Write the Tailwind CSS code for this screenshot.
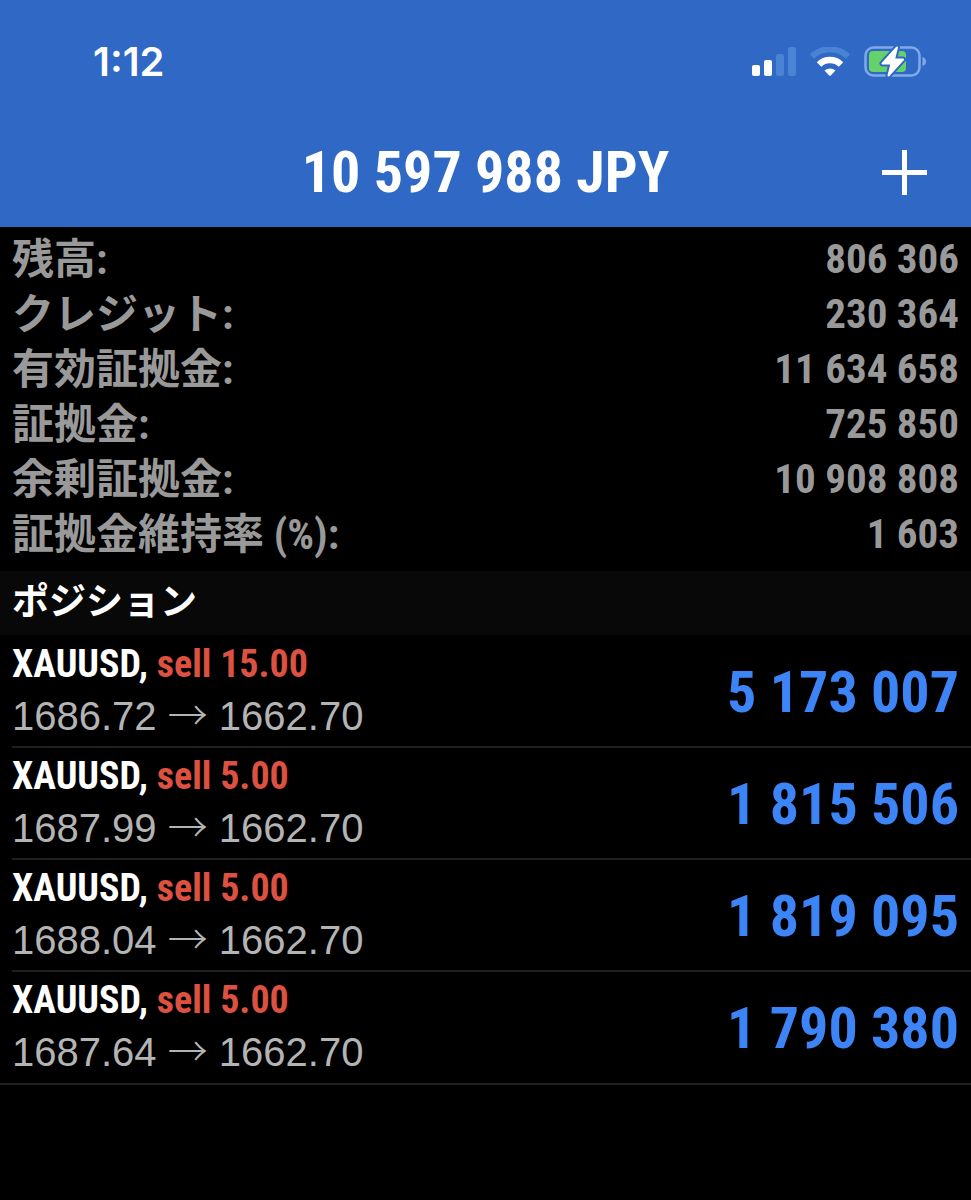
<!DOCTYPE html>
<html lang="ja">
<head>
  <meta charset="UTF-8" />
  <meta name="viewport" content="width=device-width, initial-scale=1.0" />
  <title>ポジション</title>
  <script src="https://cdn.jsdelivr.net/npm/@tailwindcss/browser@4"></script>
</head>
<body class="min-h-screen bg-black font-['Roboto_Condensed','Noto_Sans_CJK_JP',sans-serif] font-bold text-white">

  <header class="bg-[#2f68c5]">
    <!-- status bar -->
    <div class="flex h-[118px] items-center justify-between pt-[6px] pr-[45px] pl-[93px]">
      <span class="font-['Inter',sans-serif] text-[40px] font-semibold">1:12</span>
      <div class="flex items-center gap-[14px]">
        <svg class="h-[30px] w-[44px]" viewBox="0 0 44 30" fill="#fff" aria-hidden="true">
          <rect x="0" y="18" width="8" height="11" rx="2" />
          <rect x="12" y="13" width="8" height="16" rx="2" />
          <rect x="24" y="7" width="8" height="22" rx="2" fill="#4a82d4" />
          <rect x="36" y="0" width="8" height="29" rx="2" fill="#4a82d4" />
        </svg>
        <svg class="h-[30px] w-[40px]" viewBox="0 0 40 30" fill="none" stroke-width="6" aria-hidden="true">
          <path d="M2 9.500a26 26 0 0 1 36 0" stroke="#4a82d4" />
          <path d="M9 17.500a16 16 0 0 1 22 0" stroke="#fff" stroke-width="6.500" />
          <path d="M14.500 23.500a8.500 8.500 0 0 1 11 0L20.800 28.500q-.8.700-1.600 0Z" fill="#fff" />
        </svg>
        <svg class="h-[34px] w-[62px]" viewBox="0 0 62 34" aria-hidden="true">
          <rect x="1.500" y="2.500" width="54" height="28" rx="8" fill="none" stroke="#82a9e6" stroke-width="2.500" />
          <path d="M58.500 12v9q3.500-1 3.500-4.500T58.500 12Z" fill="#82a9e6" />
          <rect x="5" y="6" width="37" height="21" rx="4" fill="#64d268" />
          <path d="M33 2.500 18.500 18.500h9L24.500 30.500 39 14.500H30Z" fill="none" stroke="#2f68c5" stroke-width="6" stroke-linejoin="round" />
          <path d="M33 2.500 18.500 18.500h9L24.500 30.500 39 14.500H30Z" fill="#fff" stroke="#fff" stroke-width="2" stroke-linejoin="round" />
        </svg>
      </div>
    </div>
    <!-- title bar -->
    <div class="grid h-[109px] grid-cols-[1fr_auto_1fr] items-center px-[44px]">
      <h1 class="col-start-2 text-[58px] leading-[109px]">10 597 988 JPY</h1>
      <button type="button" aria-label="新規注文" class="justify-self-end">
        <svg class="h-[45px] w-[45px]" viewBox="0 0 45 45" stroke="#fff" stroke-width="5"><path d="M22.500 0v45M0 22.500h45" /></svg>
      </button>
    </div>
  </header>

  <main>
    <dl class="px-3 pt-[5px] pb-[9px] text-[42px] leading-[55px] text-[#999]">
      <div class="flex justify-between"><dt>残高:</dt><dd class="text-[41px]">806 306</dd></div>
      <div class="flex justify-between"><dt>クレジット:</dt><dd class="text-[41px]">230 364</dd></div>
      <div class="flex justify-between"><dt>有効証拠金:</dt><dd class="text-[41px]">11 634 658</dd></div>
      <div class="flex justify-between"><dt>証拠金:</dt><dd class="text-[41px]">725 850</dd></div>
      <div class="flex justify-between"><dt>余剰証拠金:</dt><dd class="text-[41px]">10 908 808</dd></div>
      <div class="flex justify-between"><dt>証拠金維持率 (%):</dt><dd class="text-[41px]">1 603</dd></div>
    </dl>

    <h2 class="bg-[#080808] px-3 text-[37px] leading-[64px]">ポジション</h2>

    <ul class="pt-px">
      <li class="pl-3">
        <div class="flex h-[112px] items-center justify-between border-b-2 border-[#1f1f1f] pr-3">
          <div class="pb-1">
            <p class="text-[38px] leading-[50px]">XAUUSD, <span class="text-[#dd5142]">sell 15.00</span></p>
            <p class="font-['Liberation_Sans','Noto_Sans_CJK_JP',sans-serif] text-[40px] leading-[48px] font-normal text-[#b4b4b4]">1686.72 <span class="font-['Noto_Sans_CJK_JP',sans-serif] font-light">→</span> 1662.70</p>
          </div>
          <p class="pt-[2px] text-[58px] text-[#3d84f7]">5 173 007</p>
        </div>
      </li>
      <li class="pl-3">
        <div class="flex h-[112px] items-center justify-between border-b-2 border-[#1f1f1f] pr-3">
          <div class="pb-1">
            <p class="text-[38px] leading-[50px]">XAUUSD, <span class="text-[#dd5142]">sell 5.00</span></p>
            <p class="font-['Liberation_Sans','Noto_Sans_CJK_JP',sans-serif] text-[40px] leading-[48px] font-normal text-[#b4b4b4]">1687.99 <span class="font-['Noto_Sans_CJK_JP',sans-serif] font-light">→</span> 1662.70</p>
          </div>
          <p class="pt-[2px] text-[58px] text-[#3d84f7]">1 815 506</p>
        </div>
      </li>
      <li class="pl-3">
        <div class="flex h-[112px] items-center justify-between border-b-2 border-[#1f1f1f] pr-3">
          <div class="pb-1">
            <p class="text-[38px] leading-[50px]">XAUUSD, <span class="text-[#dd5142]">sell 5.00</span></p>
            <p class="font-['Liberation_Sans','Noto_Sans_CJK_JP',sans-serif] text-[40px] leading-[48px] font-normal text-[#b4b4b4]">1688.04 <span class="font-['Noto_Sans_CJK_JP',sans-serif] font-light">→</span> 1662.70</p>
          </div>
          <p class="pt-[2px] text-[58px] text-[#3d84f7]">1 819 095</p>
        </div>
      </li>
      <li class="border-b-2 border-[#1f1f1f] pl-3">
        <div class="flex h-[111px] items-center justify-between pr-3">
          <div class="pb-1">
            <p class="text-[38px] leading-[50px]">XAUUSD, <span class="text-[#dd5142]">sell 5.00</span></p>
            <p class="font-['Liberation_Sans','Noto_Sans_CJK_JP',sans-serif] text-[40px] leading-[48px] font-normal text-[#b4b4b4]">1687.64 <span class="font-['Noto_Sans_CJK_JP',sans-serif] font-light">→</span> 1662.70</p>
          </div>
          <p class="pt-[2px] text-[58px] text-[#3d84f7]">1 790 380</p>
        </div>
      </li>
    </ul>
  </main>

</body>
</html>
